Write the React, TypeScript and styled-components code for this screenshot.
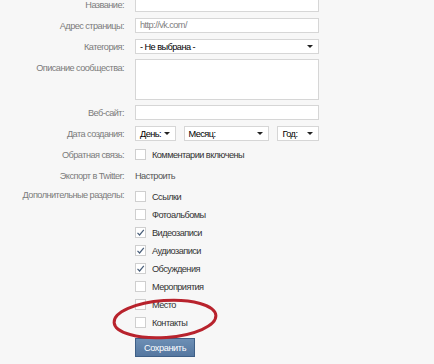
import styled, { createGlobalStyle } from 'styled-components';

const GlobalStyle = createGlobalStyle`
  html, body {
    margin: 0;
    padding: 0;
    background: #f7f7f7;
  }
  body {
    font-family: Tahoma, "Liberation Sans", Arial, sans-serif;
    font-size: 9.2px;
    letter-spacing: -0.55px;
    color: #222;
  }
`;

const Page = styled.div`
  position: relative;
  width: 434px;
  height: 364px;
  overflow: hidden;
`;

const Form = styled.div`
  margin-top: -6px;
  display: flex;
  flex-direction: column;
`;

const Row = styled.div<{ $h?: number; $top?: boolean }>`
  display: flex;
  align-items: ${(p) => (p.$top ? 'flex-start' : 'center')};
  height: ${(p) => p.$h ?? 21}px;
`;

const Label = styled.div<{ $pad?: number }>`
  width: 124px;
  text-align: right;
  color: #7b7b7b;
  padding-top: ${(p) => p.$pad ?? 0}px;
  white-space: nowrap;
`;

const Field = styled.div`
  margin-left: 11px;
  width: 184px;
  display: flex;
  align-items: center;
  gap: 8px;
`;

const TextInput = styled.div`
  box-sizing: border-box;
  width: 184px;
  height: 15px;
  background: #fff;
  border: 1px solid #d6d6d6;
  padding: 0 4px;
  line-height: 13px;
  color: #808080;
`;

const TextArea = styled.div`
  box-sizing: border-box;
  width: 184px;
  height: 41px;
  margin-top: 2px;
  background: #fff;
  border: 1px solid #d6d6d6;
`;

const Select = styled.div<{ $w: number }>`
  box-sizing: border-box;
  width: ${(p) => p.$w}px;
  height: 15px;
  background: #fff;
  border: 1px solid #d6d6d6;
  padding: 0 5px 0 4px;
  display: flex;
  align-items: center;
  justify-content: space-between;
  color: #000;
`;

const Arrow = styled.span`
  width: 0;
  height: 0;
  border-left: 3px solid transparent;
  border-right: 3px solid transparent;
  border-top: 3px solid #222;
`;

const CheckList = styled.div<{ $pt?: number }>`
  margin-left: 11px;
  display: flex;
  flex-direction: column;
  padding-top: ${(p) => p.$pt ?? 0}px;
`;

const CheckRow = styled.label`
  display: flex;
  align-items: center;
  gap: 6px;
  height: 18px;
  color: #333;
`;

const Box = styled.span`
  box-sizing: border-box;
  width: 11px;
  height: 11px;
  background: #fff;
  border: 1px solid #cfcfcf;
  display: flex;
  align-items: center;
  justify-content: center;
`;

const Link = styled.span`
  margin-left: 11px;
  color: #555;
`;

const SaveButton = styled.button`
  margin: 6px 0 0 135px;
  width: 60px;
  height: 19px;
  padding: 0;
  border: 1px solid #3e5f86;
  background: linear-gradient(#6d8fb5, #5577a0);
  color: #fff;
  font-family: inherit;
  font-size: 9.2px;
  letter-spacing: -0.4px;
`;

const Ellipse = styled.svg`
  position: absolute;
  left: 110px;
  top: 295px;
`;

function Check({ checked }: { checked?: boolean }) {
  return (
    <Box>
      {checked && (
        <svg width="9" height="9" viewBox="0 0 9 9">
          <path d="M1.5 4.8 L3.6 7 L7.8 1.8" fill="none" stroke="#4a5f7a" strokeWidth="1.2" />
        </svg>
      )}
    </Box>
  );
}

const sections: [string, boolean][] = [
  ['Ссылки', false],
  ['Фотоальбомы', false],
  ['Видеозаписи', true],
  ['Аудиозаписи', true],
  ['Обсуждения', true],
  ['Мероприятия', false],
  ['Место', false],
  ['Контакты', false],
];

export default function App() {
  return (
    <Page>
      <GlobalStyle />
      <Form>
        <Row>
          <Label>Название:</Label>
          <Field>
            <TextInput />
          </Field>
        </Row>
        <Row>
          <Label>Адрес страницы:</Label>
          <Field>
            <TextInput>http://vk.com/</TextInput>
          </Field>
        </Row>
        <Row>
          <Label>Категория:</Label>
          <Field>
            <Select $w={184}>
              <span>- Не выбрана -</span>
              <Arrow />
            </Select>
          </Field>
        </Row>
        <Row $h={45} $top>
          <Label $pad={6}>Описание сообщества:</Label>
          <Field>
            <TextArea />
          </Field>
        </Row>
        <Row>
          <Label>Веб-сайт:</Label>
          <Field>
            <TextInput />
          </Field>
        </Row>
        <Row>
          <Label>Дата создания:</Label>
          <Field>
            <Select $w={41}>
              <span>День:</span>
              <Arrow />
            </Select>
            <Select $w={87}>
              <span>Месяц:</span>
              <Arrow />
            </Select>
            <Select $w={42}>
              <span>Год:</span>
              <Arrow />
            </Select>
          </Field>
        </Row>
        <Row>
          <Label>Обратная связь:</Label>
          <CheckList>
            <CheckRow>
              <Check />
              Комментарии включены
            </CheckRow>
          </CheckList>
        </Row>
        <Row>
          <Label>Экспорт в Twitter:</Label>
          <Link>Настроить</Link>
        </Row>
        <Row $h={146} $top>
          <Label $pad={4}>Дополнительные разделы:</Label>
          <CheckList $pt={1.5}>
            {sections.map(([name, on]) => (
              <CheckRow key={name}>
                <Check checked={on} />
                {name}
              </CheckRow>
            ))}
          </CheckList>
        </Row>
        <SaveButton>Сохранить</SaveButton>
      </Form>
      <Ellipse width="112" height="50" viewBox="0 0 112 50">
        <ellipse
          cx="55"
          cy="24"
          rx="51"
          ry="18.5"
          fill="none"
          stroke="#b8232d"
          strokeWidth="3"
          transform="rotate(-4 55 24)"
        />
      </Ellipse>
    </Page>
  );
}
